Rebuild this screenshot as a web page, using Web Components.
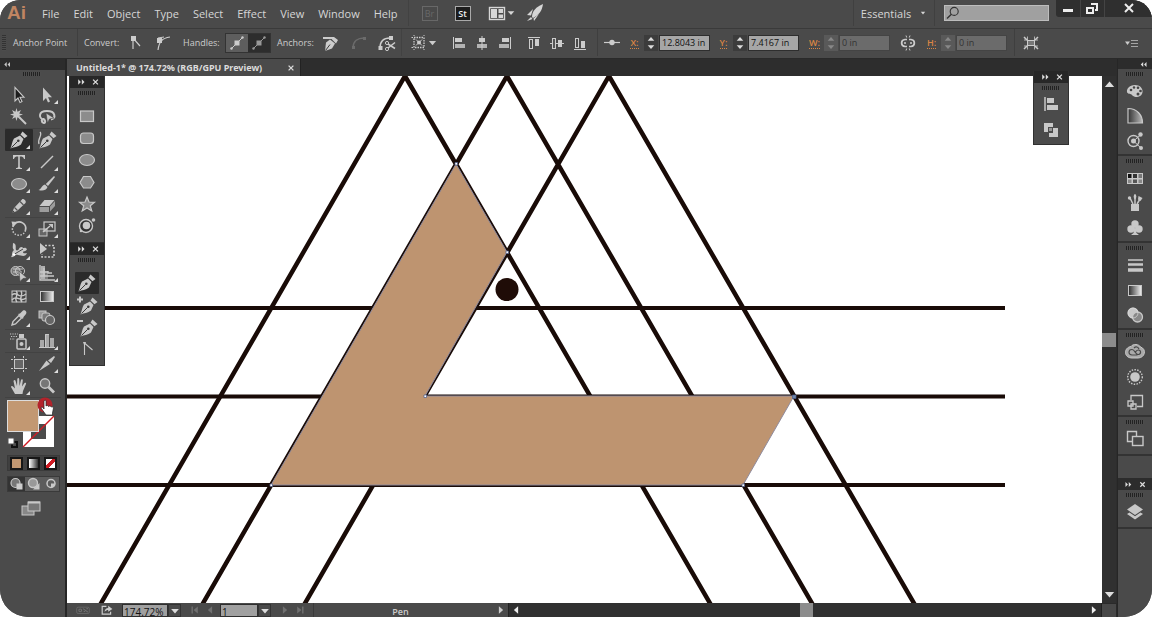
<!DOCTYPE html>
<html lang="en">
<head>
<meta charset="utf-8">
<title>Untitled-1 - Vector editor</title>
<style>
  html, body { height: 100%; margin: 0; background: #fff; }
  body { font-family: "Open Sans", "Noto Sans", sans-serif; overflow: hidden; }
</style>
</head>
<body>
<ai-app></ai-app>
<script>
// Icon artwork on a 20 x 20 grid, centred on 10,10.
const NIB = '<path d="M1.500 18.500 C3 15 3 11 5 8.500 L11 5.500 L14.500 9 L12 14.500 C9 17 5 17 1.500 18.500 Z"/><path d="M11.500 4.500 L13.500 1.500 L18.500 6 L15.500 8.300 Z"/><path d="M2.500 17.500 L8.500 11.500" stroke="#3a3a3a" stroke-width="1" fill="none"/><circle cx="9.300" cy="10.700" r="1.300" fill="#3a3a3a"/>';
const L = 'fill="none" stroke="currentColor"';
const ICONS = {
  select: `<path d="M6 2.500 V16 L9 13 L11 17.500 L13 16.500 L11 12.300 H15 Z" fill="#1d1d1d" stroke="currentColor" stroke-width="1.100"/>`,
  direct: `<path d="M6 2.500 V16 L9 13 L11 17.500 L13 16.500 L11 12.300 H15 Z"/>`,
  wand: `<path d="M7.500 1 L8.500 4.800 L12 3 L10.200 6.500 L14 7.500 L10.200 8.700 L12 12 L8.500 10.200 L7.500 14 L6.400 10.200 L3 12 L4.800 8.700 L1 7.500 L4.800 6.500 L3 3 L6.400 4.800 Z"/><path d="M10 10 L17 17" stroke="currentColor" stroke-width="2"/>`,
  lasso: `<path d="M8 13 C1 12 1 4 10 4 C19 4 19 11 14 12.500 M7 12 C4 12 4 15 7 16 C9 16 8 12 6.500 12" ${L} stroke-width="2"/><path d="M9 6 L17 11 L12.500 12 L10.500 16 Z" stroke="#444" stroke-width=".6"/>`,
  pen: NIB,
  curve: `<path d="M3 2 C6 5 0 9 2 14" ${L} stroke-width="1.300"/><g transform="translate(1 0)">${NIB}</g>`,
  type: `<path d="M4 3 H16 V7 H15 C14.500 5 13.500 4.500 10.800 4.500 V14.500 C10.800 15.500 12 16 13 16 V17 H7 V16 C8 16 9.200 15.500 9.200 14.500 V4.500 C6.500 4.500 5.500 5 5 7 H4 Z"/>`,
  line: `<path d="M4 16 L16 4" ${L} stroke-width="1.500"/>`,
  ellipse: `<ellipse cx="10" cy="10" rx="7.500" ry="5.500" fill="#8c8c8c" stroke="currentColor" stroke-width="1.200"/>`,
  brush: `<path d="M17 2 L18 3 L11 12 L8.800 10 Z"/><path d="M8 10.500 L10.500 13 C9 17 5 17 1.500 16 C5 15 4 11.500 8 10.500 Z"/>`,
  pencil: `<path d="M3 17 L5 12 L13 3.500 C14 2 18 5 16.500 7 L8 15 Z"/><path d="M5.500 11.500 L8.500 14.500 M11 5.500 L14.500 9" stroke="#555" stroke-width="1.200"/><path d="M3 17 L4 14.500 L5.500 16 Z" fill="#333"/>`,
  eraser: `<path d="M7.500 4 H17.500 L12.500 10 H2.500 Z"/><path d="M2.500 11 H12 V16 H2.500 Z M13 10.500 L18 5 V10 L13 15.500 Z" fill="#9c9c9c"/>`,
  rotate: `<path d="M5 5 C11 0 18 5 16.500 11 " ${L} stroke-width="1.700"/><path d="M16.500 11 C15 18 5 18 3.500 11 C3 8.500 4 6.500 5 5" ${L} stroke-width="1.500" stroke-dasharray="1.500 1.500"/><path d="M2.500 2.500 L8.500 3 L4 8.500 Z"/>`,
  scale: `<rect x="2" y="10" width="8" height="7" fill="#666" stroke="currentColor"/><rect x="7" y="3" width="11" height="9" ${L} stroke-width="1.200"/><path d="M6 13 L13 7" ${L} stroke-width="1.500"/><path d="M11.500 5 H16 V9.500 Z"/>`,
  width: `<path d="M4 2 C9 3 5 9 8 9.500 C10 9.500 10 6 12.500 6 C14 6 14 8 16 6.500 L18 8 C17 11 14 9.500 14 11.500 C15 13 17 12 18 12 C16 17 12 14 9 14 C6 13 5 17 2 16 C4 14 2 11 5 9 C3 7 4 5 4 2 Z"/><path d="M4 14 L14 8" stroke="#444" stroke-width="1"/><circle cx="5" cy="13.500" r="1.300" fill="#fff"/>`,
  transform: `<path d="M3 2 V13 L10 8 Z"/><path d="M8 4.500 H17 V16 H5 V13" ${L} stroke-width="1.600" stroke-dasharray="2 1.500"/>`,
  shape: `<circle cx="6.500" cy="8" r="4.500" fill="#777" stroke="currentColor"/><circle cx="11" cy="8" r="4.500" ${L}/><path d="M4 6 H14 M4 9 H13" stroke="currentColor"/><path d="M10 8 L18 15 L14 15.500 L11 18.500 Z" stroke="#444" stroke-width=".6"/>`,
  perspective: `<path d="M3 2 V17 H18 M7 5 V13 H17 M11 8 V10 H15 M3 9 H11 M3 13 H7" ${L} stroke-width="1.400"/><path d="M4 3 H8 V16 H4 Z" opacity=".8"/><path d="M8 8 H11 V16 H8 Z" opacity=".4"/>`,
  mesh: `<rect x="3" y="5" width="14" height="11" fill="#444" stroke="currentColor"/><path d="M3 9 C8 4 9 14 17 8 M3 14 C8 8 11 17 17 12 M7 5 C11 8 4 12 8 16 M12 5 C15 9 9 12 13 16" ${L} stroke-width="1.400"/>`,
  gradient: `<defs><linearGradient id="g"><stop stop-color="#2b2b2b"/><stop offset="1" stop-color="#f2f2f2"/></linearGradient></defs><rect x="3.500" y="5.500" width="13" height="10" fill="url(#g)" stroke="currentColor"/>`,
  dropper: `<path d="M3 17 L4 13.500 L10 7.500 L12.500 10 L6.500 16 Z" ${L} stroke-width="1.400"/><path d="M9 6 L11 5.500 L14 2.500 C16 1.500 18.500 4 17 6 L14.500 9 L14 11 Z"/>`,
  blend: `<rect x="2" y="3" width="7" height="7" fill="#999" stroke="currentColor"/><rect x="5" y="5" width="8" height="8" rx="2" fill="#777" stroke="currentColor"/><circle cx="13" cy="12" r="4.500" fill="#666" stroke="currentColor" stroke-width="1.200"/>`,
  spray: `<rect x="8" y="8" width="9" height="10" rx="1" ${L} stroke-width="1.500"/><path d="M10 3 H15 V7 H10 Z"/><circle cx="12.500" cy="13" r="2"/><path d="M1 3 H9 M2 5.500 H8 M1 8 H6" ${L} stroke-width="1.200" stroke-dasharray="1.200 1.200"/>`,
  graph: `<path d="M3 9 H7 V16 H3 Z M8 3 H12 V16 H8 Z M13 7 H17 V16 H13 Z" opacity=".75"/><path d="M2 16.500 H18 M8.500 16 V3.500 H12" ${L}/>`,
  artboard: `<rect x="5.500" y="5.500" width="9" height="9" fill="#666" stroke="currentColor"/><path d="M5.500 2 V4 M14.500 2 V4 M5.500 16 V18 M14.500 16 V18 M2 5.500 H4 M2 14.500 H4 M16 5.500 H18 M16 14.500 H18" ${L}/>`,
  slice: `<path d="M2 17 L9.500 6.500 L13 10 Z"/><path d="M11 6.500 L17 2 L18 3 L14 9 Z"/>`,
  hand: `<path d="M6 18 L2 11 C2 9.500 3.500 9.500 4.500 11 L6 12.500 L4.500 5 C5 3.500 6.300 4 6.600 5 L8 10 L8.300 3 C8.600 1.600 10 1.600 10.200 3 L10.500 10 L12 4 C12.500 2.600 14 3.300 13.800 4.500 L13 10.500 L15.500 7 C16.500 6.200 17.500 7 17 8 L14 15 L13.500 18 Z"/>`,
  zoom: `<circle cx="8" cy="7.500" r="4.700" fill="#777" stroke="currentColor" stroke-width="1.400"/><path d="M11.500 11 L17 16.500" stroke="currentColor" stroke-width="2.800"/>`,
  rect: `<rect x="3.500" y="5" width="13" height="10.500" fill="#8c8c8c" stroke="currentColor" stroke-width="1.200"/>`,
  rrect: `<rect x="3.500" y="5" width="13" height="10.500" rx="3" fill="#8c8c8c" stroke="currentColor" stroke-width="1.200"/>`,
  hexagon: `<path d="M6.500 4.500 H13.500 L17 10.500 L13.500 16 H6.500 L3 10.500 Z" fill="#8c8c8c" stroke="currentColor" stroke-width="1.200"/>`,
  star: `<path d="M10 3 L12 8 L17.500 8.300 L13.300 11.800 L14.800 17 L10 14 L5.200 17 L6.700 11.800 L2.500 8.300 L8 8 Z" fill="#8c8c8c" stroke="currentColor" stroke-width="1.200"/>`,
  flare: `<circle cx="9" cy="10" r="6.500" fill="#333" stroke="currentColor" stroke-width="1.400"/><circle cx="9.500" cy="9.500" r="3.800"/><circle cx="16.500" cy="4" r="1.800"/><circle cx="4" cy="15" r="1.300"/>`,
  penadd: `<path d="M0 4.500 H6 M3 1.500 V7.500" ${L} stroke-width="2"/><g transform="translate(2 1)">${NIB}</g>`,
  pendel: `<path d="M0 4 H6" ${L} stroke-width="2"/><g transform="translate(2 1)">${NIB}</g>`,
  anchor: `<path d="M7.500 16 V4 L15.500 11" ${L} stroke-width="1.100"/><path d="M6 3 H9 L7.500 7 Z"/>`,
  corner: `<path d="M8 16 V5 L15 13" ${L} stroke-width="1.200"/><rect x="6" y="3" width="5" height="5"/>`,
  smooth: `<path d="M5 17 C6 9 9 5 17 4" ${L} stroke-width="1.200"/><rect x="4" y="5" width="5" height="5"/><path d="M5 5 L11 4" ${L}/>`,
  handle: `<path d="M4 16 L16 4" ${L} stroke-width="1"/><rect x="7.500" y="7.500" width="5" height="5"/><circle cx="4.500" cy="15.500" r="1.200"/><circle cx="15.500" cy="4.500" r="1.200"/>`,
  removepen: `<path d="M4 18 L5 9.500 L9 6.500 L14 10.500 L11 15.500 Z"/><path d="M2 4 H13 L17 7 L15 10.500 L10.500 6 H2 Z"/><path d="M4.500 17.500 L9 11.500" stroke="#3a3a3a"/>`,
  curveoff: `<path d="M4 15 C4 8 9 5 15 5" ${L} stroke-width="1.500"/><rect x="3" y="13" width="3" height="3"/><rect x="14" y="4" width="3" height="3"/>`,
  cut: `<path d="M3 15 C3 8 7 5 13 5" ${L} stroke-width="1.500"/><rect x="1.500" y="13" width="4" height="4"/><rect x="12" y="3" width="4" height="4"/><circle cx="10" cy="16" r="1.600" ${L}/><circle cx="10" cy="10" r="1.600" ${L}/><path d="M11 11 L18 15.500 M11 15 L18 9.500" ${L} stroke-width="1.500"/>`,
  isolate: `<rect x="4" y="4.500" width="10" height="10" ${L} stroke-width="1.300" stroke-dasharray="1.500 1"/><path d="M6 6.500 L12 12.500 M12 6.500 L6 12.500" ${L}/><circle cx="9" cy="9.500" r="2"/><path d="M1.500 4.500 H3 M1.500 14.500 H3 M4 2 V3 M14 2 V3 M4 16 V17 M14 16 V17" ${L}/>`,
  alignl: `<path d="M4.500 4 V16" ${L}/><rect x="6" y="5" width="7" height="4"/><rect x="6" y="11" width="10" height="4" opacity=".8"/>`,
  alignbig: `<path d="M4 3 V17" ${L} stroke-width="1.500"/><rect x="6" y="4" width="7" height="5"/><rect x="6" y="11" width="11" height="5"/>`,
  alignc: `<path d="M10 3 V17" ${L}/><rect x="7" y="5" width="6" height="4"/><rect x="5" y="11" width="10" height="4" opacity=".8"/>`,
  alignr: `<path d="M15.500 4 V16" ${L}/><rect x="7" y="5" width="7" height="4"/><rect x="4" y="11" width="10" height="4" opacity=".8"/>`,
  alignt: `<path d="M4 4.500 H16" ${L}/><rect x="5.500" y="6.500" width="3" height="9" ${L}/><rect x="11" y="6" width="4" height="7"/>`,
  alignm: `<path d="M3 10.500 H17" ${L}/><rect x="5.500" y="5.500" width="3" height="10" fill="#555" stroke="currentColor"/><rect x="11" y="7" width="4" height="7"/>`,
  alignb: `<path d="M4 16.500 H16" ${L}/><rect x="5.500" y="5.500" width="3" height="9" ${L}/><rect x="11" y="8" width="4" height="7"/>`,
  point: `<path d="M2 9.500 H18" ${L} stroke-width="1.200"/><circle cx="10" cy="9.500" r="2.700"/>`,
  link: `<path d="M9 6.500 H7 C2.500 7 2.500 13 7 13.500 H9 M11 6.500 H13 C17.500 7 17.500 13 13 13.500 H11 M6 10 H8 M12 10 H14" ${L} stroke-width="1.700"/><path d="M8 2.500 L8.700 4.500 M12 2.500 L11.300 4.500 M8 17.500 L8.700 15.500 M12 17.500 L11.300 15.500" ${L}/>`,
  freet: `<rect x="6.500" y="7.500" width="7" height="5" fill="#777" stroke="currentColor"/><path d="M3 4 L6 7 M17 4 L14 7 M3 16 L6 13 M17 16 L14 13" ${L} stroke-width="1.500"/><path d="M6.500 3.500 V7 H3 M13.500 3.500 V7 H17 M6.500 16.500 V13 H3 M13.500 16.500 V13 H17" ${L} stroke-width=".8"/>`,
  menu: `<path d="M3 8.500 H8 L5.500 12 Z"/><path d="M9 7.500 H16 M9 10.500 H16 M9 13.500 H16" ${L} stroke-width="1" opacity=".7"/>`,
  arrange: `<rect x="2.500" y="4.500" width="15" height="12" fill="none" stroke="currentColor" stroke-width="1.400"/><path d="M4 6 H10 V15 H4 Z M11.500 6 H16 V10 H11.500 Z M11.500 11.500 H16 V15 H11.500 Z"/>`,
  rocket: `<path d="M18 1 C11 4 7 8 7 14 L8 15 C14 12 17 8 18 1 Z"/><path d="M8 6 L2 12 L6 12.500 Z M14 11 L9 18 L8.500 15.500 Z M6 14 L2 18 L7.500 16 Z"/>`,
  color: `<path d="M10 4 C4 4 1.500 8 2 11 C2.500 13 5 12.500 6.500 13.500 C8 15.500 10 16 12 16 C20 15.500 19.500 4 10 4 Z"/><g fill="#444"><circle cx="6" cy="9" r="1.300"/><circle cx="9" cy="6.500" r="1.200"/><circle cx="13" cy="6.800" r="1.300"/><circle cx="15.500" cy="10" r="1.300"/><circle cx="13" cy="13" r="1.500"/></g>`,
  guide: `<defs><linearGradient id="q" x1="0" y1="0" x2="1" y2="0"><stop stop-color="#333"/><stop offset="1" stop-color="#bbb"/></linearGradient></defs><path d="M3 2.500 V17 H17.500 C17.500 9 12 2.500 3 2.500 Z" fill="url(#q)" stroke="currentColor" stroke-width="1.200"/>`,
  themes: `<circle cx="8.500" cy="10" r="5.500" ${L} stroke-width="1.400"/><circle cx="8.500" cy="10" r="2.500"/><circle cx="15.500" cy="3.500" r="2.200"/><circle cx="16" cy="17" r="2"/><path d="M8.500 10 L15.500 4 M8.500 10 L16 17" ${L}/>`,
  swatches: `<path d="M2 5 H18 V16 H2 Z"/><path d="M3 6 H6.500 V10 H3 Z" fill="#111"/><path d="M8 6 H12 V10 H8 Z" fill="#333"/><path d="M13.500 6 H17 V10 H13.500 Z" fill="#777"/><path d="M3 11.500 H6.500 V15 H3 Z M13.500 11.500 H17 V15 H13.500 Z" fill="#888"/><path d="M8 11.500 H12 V15 H8 Z" fill="#555"/>`,
  brushes: `<path d="M6 11 H14 V18 H6 Z"/><path d="M10 11 V3 M8 11 L5 5 M12 11 L15 6" ${L} stroke-width="1.500"/><ellipse cx="10" cy="3.500" rx="1.300" ry="2.500"/><circle cx="4.500" cy="5" r="1.700"/><path d="M13.500 3 L17.500 5 L15.500 8 L13 6.500 Z"/>`,
  symbols: `<circle cx="10" cy="6" r="3.700"/><circle cx="6" cy="11" r="3.700"/><circle cx="14" cy="11" r="3.700"/><path d="M9.300 9 H10.700 L11.500 15 L14 17 H6 L8.500 15 Z"/>`,
  stroke: `<path d="M3 5 H18" stroke="currentColor" stroke-width="1.500"/><path d="M3 9.500 H18" stroke="currentColor" stroke-width="2.500"/><path d="M3 15 H18" stroke="currentColor" stroke-width="3.500"/>`,
  transp: `<circle cx="8" cy="8" r="5.500"/><circle cx="12.500" cy="12" r="5" fill="#888" stroke="currentColor" stroke-width="1.300"/><circle cx="8" cy="8" r="5" fill="none" stroke="#ddd" stroke-width=".7"/>`,
  cc: `<path d="M6 4.500 C8 1.500 14 2 15.500 5 C22 7 20 16 13 16 H7 C-1.500 16 -1.500 5.500 6 4.500 Z" fill="#aaa" stroke="currentColor"/><path d="M12.500 13 H7 C3 13 3 7.500 7 7.500 C10 7.500 10.500 13 13.500 12.500 C16.500 12 16 8 13.500 8 C11.500 8 11 9.500 10 10.500 M9 6 C11 4 13 5 14 7" fill="none" stroke="#484848" stroke-width="1.200"/>`,
  appear: `<circle cx="10" cy="10" r="4.800"/><circle cx="10" cy="10" r="7.300" ${L} stroke-width="1.400" stroke-dasharray="1.500 1.300"/>`,
  styles: `<path d="M6 8 V3.500 H17.500 V14.500 H12" ${L} stroke-width="1.300"/><path d="M3 9 H8 V14 H3 Z M6 12 H11 V17 H6 Z" ${L} stroke-width="1.300"/>`,
  artboards: `<path d="M7 12.500 H2.500 V2.500 H11.500 V7" ${L} stroke-width="1.400"/><rect x="7.500" y="7.500" width="10.500" height="9" ${L} stroke-width="1.400"/>`,
  layers: `<path d="M10 2 L18 7.500 L10 13 L2 7.500 Z"/><path d="M2 12 L4.500 10.500 L10 14.200 L15.500 10.500 L18 12 L10 17.500 Z"/>`,
  pathfinder: `<path d="M3 3 H12 V7 H7 V12 H3 Z" /><path d="M8 13 H12 V8 H17 V17 H8 Z"/><rect x="8" y="8" width="3" height="3" opacity=".6"/>`,
  drawn: `<circle cx="8.500" cy="9" r="4.500" fill="#777" stroke="currentColor" stroke-width="1.200"/><rect x="9.500" y="9.500" width="6" height="6" fill="#ccc"/>`,
  drawb: `<circle cx="9" cy="9" r="4.500" fill="#999" stroke="currentColor" stroke-width="1.400"/><path d="M15.500 9 V15.500 H9 Z"/>`,
  drawi: `<circle cx="10" cy="9.500" r="4" ${L} stroke-width="1.500"/><path d="M10 9.500 H14 A4 4 0 0 1 10 13.500 Z"/>`,
  screen: `<rect x="1" y="8" width="12" height="9" fill="#888" stroke="currentColor"/><rect x="7" y="4" width="12" height="9" fill="#777" stroke="currentColor"/><path d="M7 4.500 H19" ${L} stroke-width="2"/>`,
  left2: `<path d="M9.500 5.500 V14.500 L5 10 Z M15.500 5.500 V14.500 L11 10 Z"/>`,
  right2: `<path d="M4.500 5.500 V14.500 L9 10 Z M10.500 5.500 V14.500 L15 10 Z"/>`,
  close: `<path d="M6 6 L14 14 M14 6 L6 14" ${L} stroke-width="2.200"/>`,
  up: `<path d="M4.500 13 L10 6.500 L15.500 13 Z"/>`,
  down: `<path d="M4.500 7 L10 13.500 L15.500 7 Z"/>`,
  prev: `<path d="M13 4.500 V15.500 L7 10 Z"/>`,
  next: `<path d="M7 4.500 V15.500 L13 10 Z"/>`,
  first: `<path d="M14 5 V15 L8 10 Z M5 5 H7 V15 H5 Z"/>`,
  last: `<path d="M6 5 V15 L12 10 Z M13 5 H15 V15 H13 Z"/>`,
  share: `<path d="M9 4 H2 V17 H16 V13" ${L} stroke-width="2"/><path d="M6 13 C6 9 9 6.500 12 6.500 V3 L19 8.500 L12 13 V10 C10 10 8 11 6 13 Z"/>`,
  gpu: `<rect x="1" y="6" width="18" height="9" rx="2" ${L}/><circle cx="6" cy="10.500" r="2" ${L} stroke-width="1.500"/><path d="M10 8 L17 13 M11 12 H13 M15 8 H17" ${L} stroke-width="1.500"/>`,
  search: `<circle cx="11.500" cy="8" r="5" ${L} stroke-width="1.400"/><path d="M8 11.500 L2.500 17" ${L} stroke-width="1.700"/>`,
  minimise: `<path d="M5 10 H15 V13 H5 Z"/>`,
  restore: `<path d="M9 5 H15 V11 H13" ${L} stroke-width="2"/><rect x="5" y="9" width="6" height="5" ${L} stroke-width="2"/>`,
  x: `<path d="M6 5 L14 13 M14 5 L6 13" ${L} stroke-width="2"/>`
};

const RESET = `
  :host, *, *::before { box-sizing: border-box; }
  button, input { margin: 0; padding: 0; border: 0; background: none; color: inherit; font: inherit; }
  button { display: flex; align-items: center; justify-content: center; }`;

function define(name, css, html) {
  customElements.define(name, class extends HTMLElement {
    connectedCallback() {
      if (this.shadowRoot) return;
      const root = this.attachShadow({ mode: 'open' });
      root.innerHTML = `<style>${RESET}${css}</style>${typeof html === 'function' ? html(this) : html}`;
    }
  });
}

define('ai-icon', `
  :host { display: block; flex: none; width: 20px; height: 20px; }
  svg { display: block; width: 100%; height: 100%; fill: currentColor; overflow: visible; }`,
  el => `<svg viewBox="0 0 20 20" aria-hidden="true">${ICONS[el.getAttribute('name')]}</svg>`);

define('ai-grip', `
  :host { display: block; width: 18px; height: 4px; margin: 0 auto;
    background: repeating-linear-gradient(90deg, #222 0 1px, #4d4d4d 1px 2px); }
  :host([upright]) { width: 4px; height: 16px; margin: 0;
    background: repeating-linear-gradient(#333 0 1px, #4d4d4d 1px 2px); }`, '');

define('ai-tool', `
  :host { display: block; }
  button { position: relative; width: 100%; height: 100%; border-radius: 1px; }
  :host([active]) button { background: #2b2b2b; }
  :host([more]) button::after { content: ""; position: absolute; right: 3px; bottom: 2px;
    border-style: solid; border-width: 0 0 4px 4px; border-color: transparent transparent #ddd; }`,
  el => `<button type="button" aria-label="${el.getAttribute('label') || el.getAttribute('icon')}"><ai-icon name="${el.getAttribute('icon')}"></ai-icon></button>`);

define('ai-menubar', `
  :host { display: flex; align-items: stretch; height: 28px; background: #4a4a4a; color: #d6d6d6; font-size: 11px; }
  .logo { width: 35px; padding-left: 7px; font: bold 19px/25px "Liberation Sans", sans-serif; color: #c08562; }
  nav { display: flex; align-items: flex-start; }
  nav button { padding: 0 7px; height: 26px; white-space: nowrap; }
  .tools { display: flex; align-items: center; height: 26px; margin-left: 3px; padding-left: 13px; border-left: 1px solid #424242; }
  .badge { width: 16px; height: 15px; border: 1px solid #686868; color: #686868; font-size: 9px; line-height: 13px; }
  .badge.on { margin: 0 17px; background: #1c1c1c; border-color: #aaa; color: #eee; font-weight: 600; }
  .arr { width: 28px; }
  .arr ai-icon + ai-icon { width: 12px; margin-left: -2px; }
  .gpu { margin-left: 9px; }
  .right { display: flex; align-items: center; height: 26px; margin-left: auto; }
  .space { width: 82px; height: 26px; border: solid #404040; border-width: 0 1px; }
  .space ai-icon { width: 8px; height: 8px; margin-left: 8px; }
  .find { display: flex; align-items: center; width: 105px; height: 16px; margin: 0 7px 0 9px; background: #a0a0a0; border: 1px solid #bdbdbd; color: #333; }
  .find ai-icon { width: 16px; height: 16px; }
  .find input { flex: 1; min-width: 0; }
  .win { display: flex; align-self: flex-start; width: 96px; height: 17px; background: #2f2f2f; color: #eee; border-radius: 0 0 0 3px; }
  .win button { flex: 1; border-right: 1px solid #444; }
  .win button:last-child { flex: 2; border: 0; }
  .win ai-icon { width: 20px; height: 20px; }`, `
  <div class="logo">Ai</div>
  <nav aria-label="Main menu">${['File','Edit','Object','Type','Select','Effect','View','Window','Help'].map(t => `<button type="button">${t}</button>`).join('')}</nav>
  <div class="tools"><button type="button" class="badge">Br</button><button type="button" class="badge on">St</button>
    <button type="button" class="arr" aria-label="Arrange documents"><ai-icon name="arrange"></ai-icon><ai-icon name="down"></ai-icon></button>
    <button type="button" class="gpu" aria-label="GPU"><ai-icon name="rocket"></ai-icon></button></div>
  <div class="right">
    <button type="button" class="space">Essentials<ai-icon name="down"></ai-icon></button>
    <label class="find"><ai-icon name="search"></ai-icon><input type="search" aria-label="Search"></label>
    <div class="win"><button type="button" aria-label="Minimise"><ai-icon name="minimise"></ai-icon></button><button type="button" aria-label="Restore"><ai-icon name="restore"></ai-icon></button><button type="button" aria-label="Close"><ai-icon name="x"></ai-icon></button></div>
  </div>`);

define('ai-field', `
  :host { display: grid; grid-template-columns: 17px 14px 51px; column-gap: 1px; align-items: center; }
  label { justify-self: center; color: #d98544; font-weight: 600; line-height: 11px; border-bottom: 1px dotted #d98544; }
  .spin { display: grid; height: 16px; background: #3c3c3c; color: #ddd; }
  .spin button { height: 8px; }
  .spin ai-icon { width: 12px; height: 12px; }
  input { width: 100%; height: 16px; padding-left: 2px; background: #a6a6a6; border: 1px solid #2e2e2e; color: #111; }
  :host([off]) .spin { background: #595959; color: #888; }
  :host([off]) input { background: #6b6b6b; border-color: #444; color: #333; }`,
  el => `<label for="v">${el.getAttribute('label')}</label>
  <div class="spin"><button type="button" aria-label="Increase"><ai-icon name="up"></ai-icon></button><button type="button" aria-label="Decrease"><ai-icon name="down"></ai-icon></button></div>
  <input id="v" type="text" value="${el.getAttribute('value')}" ${el.hasAttribute('off') ? 'disabled' : ''}>`);

define('ai-controlbar', `
  :host { display: grid; align-items: center; height: 30px; padding-bottom: 2px; background: #4a4a4a; color: #ccc; border-top: 1px solid #3a3a3a; font-size: 9px; white-space: nowrap;
    grid-template-columns: 78px 43px repeat(2, 28px) 48px 46px 46px repeat(3, 28px) 46px 69px 6px 76px 28px 86px 3px 86px 5px 86px 31px 86px 6px 32px 1fr; }
  .name { display: flex; align-items: center; gap: 7px; padding-left: 2px; height: 27px; border-right: 1px solid #3f3f3f; }
  .lab { padding-left: 6px; }
  .row { display: flex; }
  ai-tool { height: 22px; }
  .pair { display: grid; grid-template-columns: 22px 22px; height: 20px; border: 1px solid #333; background: #2d2d2d; }
  .pair ai-tool { height: 18px; }
  .pair ai-tool:first-child { background: #5e5e5e; }
  .pair ai-tool:last-child { color: #999; }
  .dim { opacity: .25; }
  .row ai-tool { flex: 0 0 23px; }
  .drop { height: 27px; border-left: 1px solid #424242; }
  .drop ai-icon + ai-icon { width: 13px; margin-left: -4px; }
  .last { justify-self: end; width: 40px; }
  .end { height: 27px; border-right: 1px solid #3f3f3f; align-items: center; }
  .rule { height: 27px; border-right: 1px solid #3f3f3f; }`, `
  <div class="name"><ai-grip upright></ai-grip><span>Anchor Point</span></div>
  <span class="lab">Convert:</span><ai-tool icon="corner"></ai-tool><ai-tool icon="smooth"></ai-tool>
  <span class="lab">Handles:</span><div class="pair"><ai-tool icon="handle"></ai-tool><ai-tool icon="handle"></ai-tool></div>
  <span class="lab">Anchors:</span><ai-tool icon="removepen"></ai-tool><ai-tool class="dim" icon="curveoff"></ai-tool><ai-tool icon="cut"></ai-tool>
  <button type="button" class="drop" aria-label="Isolate"><ai-icon name="isolate"></ai-icon><ai-icon name="down"></ai-icon></button>
  <div class="row"><ai-tool icon="alignl"></ai-tool><ai-tool icon="alignc"></ai-tool><ai-tool icon="alignr"></ai-tool></div><i></i>
  <div class="row end"><ai-tool icon="alignt"></ai-tool><ai-tool icon="alignm"></ai-tool><ai-tool icon="alignb"></ai-tool></div>
  <ai-tool icon="point"></ai-tool>
  <ai-field label="X:" value="12.8043 in"></ai-field><i></i><ai-field label="Y:" value="7.4167 in"></ai-field><i></i>
  <ai-field off label="W:" value="0 in"></ai-field><ai-tool icon="link"></ai-tool><ai-field off label="H:" value="0 in"></ai-field>
  <i class="rule"></i><ai-tool icon="freet"></ai-tool><ai-tool class="last" icon="menu"></ai-tool>`);

const GROUPS = [
  ['select', 'direct+', 'wand', 'lasso'],
  ['pen+*', 'curve', 'type+', 'line+', 'ellipse+', 'brush+', 'pencil+', 'eraser+'],
  ['rotate+', 'scale+', 'width+', 'transform', 'shape+', 'perspective+'],
  ['mesh', 'gradient', 'dropper+', 'blend'],
  ['spray+', 'graph+'],
  ['artboard', 'slice+', 'hand+', 'zoom']
];
const tool = t => `<ai-tool icon="${t.replace(/[+*]/g, '')}" ${t.includes('+') ? 'more' : ''} ${t.includes('*') ? 'active' : ''}></ai-tool>`;

define('ai-toolbox', `
  :host { display: flex; flex-direction: column; background: #4b4b4b; color: #c8c8c8; border-right: 2px solid #262626; }
  header { flex: none; height: 11px; background: #2c2c2c; }
  header ai-icon { width: 14px; height: 11px; }
  ai-grip { margin: 2px 0 8px 23px; flex: none; }
  .group { display: grid; grid-template-columns: 28px 28px; grid-auto-rows: 22px; margin: 0 4px 0 5px; border-bottom: 1px solid #424242; }
  .group:last-of-type { border: 0; }
  .paint { position: relative; flex: none; width: 47px; height: 47px; margin: 2px 0 8px 7px; }
  .paint button { position: absolute; }
  .line { left: 16px; top: 16px; width: 31px; height: 31px; }
  .fill { left: 0; top: 0; width: 32px; height: 32px; background: #c29872; border: 1px solid #ddd; }
  .def { left: 0; top: 37px; width: 12px; height: 12px; }
  .swap { left: 30px; top: -3px; width: 22px; height: 22px; }
  .paint svg { display: block; width: 100%; height: 100%; overflow: visible; }
  .three { flex: none; display: grid; grid-template-columns: repeat(3, 17px); grid-auto-rows: 14px; width: 53px; height: 16px; margin: 0 0 5px 7px; border: 1px solid #3a3a3a; background: #404040; }
  .three span { display: block; width: 13px; height: 13px; border: 2px solid #171717; }
  .c { background: #c29872; } .g { background: linear-gradient(90deg, #fff, #333); }
  .n { background: linear-gradient(to bottom right, #fff 38%, #d01c24 38% 62%, #fff 62%); }
  .modes { background: #5c5c5c; }
  .modes button:first-child { background: #333; }
  .mode { width: 28px; height: 24px; margin: -1px 0 0 17px; }`,
  `<header><ai-icon name="left2"></ai-icon></header><ai-grip></ai-grip>
  ${GROUPS.map(g => `<div class="group">${g.map(tool).join('')}</div>`).join('')}
  <section class="paint" aria-label="Fill and stroke">
    <button type="button" class="line" aria-label="Stroke"><svg viewBox="0 0 31 31"><path fill="#fff" fill-rule="evenodd" d="M0 0 H31 V31 H0 Z M8 8 V23 H23 V8 Z"/><path d="M0 31 L31 0" stroke="#d01c24" stroke-width="1.500"/></svg></button>
    <button type="button" class="fill" aria-label="Fill"></button>
    <button type="button" class="def" aria-label="Default colours"><svg viewBox="0 0 12 12"><rect x="5" y="5" width="5" height="5" fill="none" stroke="#111" stroke-width="2"/><rect x="1" y="1" width="6" height="6" fill="#fff" stroke="#555"/></svg></button>
    <button type="button" class="swap" aria-label="Swap fill and stroke"><svg viewBox="0 0 22 22"><circle cx="8" cy="8" r="7.500" fill="#b3232b"/><path d="M9 18 L4 11 C4 9.500 6 10 7 12 L7 4 C7.500 3 9 3 9 4 V9 C10 8 11.500 8.500 11.500 9.500 C12.500 8.500 14 9 14 10 C15 9.500 16.500 10 16.500 11 L15.500 16 V18 Z" fill="#fff" stroke="#222" stroke-width=".7"/></svg></button>
  </section>
  <div class="three"><button type="button" aria-label="Colour"><span class="c"></span></button><button type="button" aria-label="Gradient"><span class="g"></span></button><button type="button" aria-label="None"><span class="n"></span></button></div>
  <div class="three modes"><button type="button" aria-label="Draw normal"><ai-icon name="drawn"></ai-icon></button><button type="button" aria-label="Draw behind"><ai-icon name="drawb"></ai-icon></button><button type="button" aria-label="Draw inside"><ai-icon name="drawi"></ai-icon></button></div>
  <ai-tool class="mode" icon="screen"></ai-tool>`);

define('ai-panel', `
  :host { display: block; background: #4b4b4b; color: #c8c8c8; border: 1px solid #303030; border-top: 0; }
  header { display: flex; align-items: center; justify-content: space-between; height: 12px; padding: 0 2px 0 5px; background: #272727; color: #ddd; }
  header ai-icon { width: 13px; height: 12px; }
  ai-grip { margin-top: 3px; }`,
  `<header><ai-icon name="right2"></ai-icon><ai-icon name="close"></ai-icon></header><ai-grip></ai-grip><slot></slot>`);

define('ai-canvas', `
  :host { display: block; position: relative; min-width: 0; min-height: 0; background: #fff; }
  svg { display: block; position: absolute; inset: 0; width: 100%; height: 100%; }
  ai-panel { position: absolute; left: 2px; width: 36px; }
  ai-panel ai-tool { height: 22px; margin: 0 5px; }
  .shapes { top: 0; height: 167px; }
  .shapes ai-tool:first-of-type { margin-top: 10px; }
  .pens { top: 167px; height: 123px; }
  .pens ai-tool:first-of-type { margin-top: 10px; }
  .aligns { top: -5px; left: auto; right: 33px; height: 74px; }
  .aligns ai-tool { height: 26px; }
  .aligns ai-tool:first-of-type { margin-top: 1px; }`, `
  <svg role="img" aria-label="Artwork"><g transform="translate(-67 -76)">
    <g stroke="#190b07" stroke-width="4.500" fill="none">
      <path d="M100 605 L405 76 L711 605 M202 605 L507 76 L813 605 M304 605 L609 76 L915 605"/>
      <path d="M60 308 H1005 M60 396.500 H1005 M60 485 H1005" stroke-width="4"/>
    </g>
    <path d="M456 164 L507 252 L425 396 H794 L743 485 H271 Z" fill="#be9470" stroke="#8f8a9c" stroke-width="1"/>
    <circle cx="507" cy="289.500" r="11.500" fill="#1f0c07"/>
    <g fill="#fff" stroke="#4a5c8c" stroke-width=".7"><path d="M455 162.500 h2.500 v2.500 h-2.500 Z M506 251 h2.500 v2.500 h-2.500 Z M424 395 h2.500 v2.500 h-2.500 Z M742 484 h2.500 v2.500 h-2.500 Z M270 484 h2.500 v2.500 h-2.500 Z"/><path fill="#6d86a8" d="M792.500 395 h3.500 v3.500 h-3.500 Z"/></g>
  </g></svg>
  <ai-panel class="shapes">${['rect','rrect','ellipse','hexagon','star','flare'].map(tool).join('')}</ai-panel>
  <ai-panel class="pens">${['pen*','penadd','pendel','anchor'].map(tool).join('')}</ai-panel>
  <ai-panel class="aligns">${['alignbig','pathfinder'].map(tool).join('')}</ai-panel>`);

define('ai-status', `
  :host { display: flex; align-items: center; height: 14px; background: #4a4a4a; color: #ccc; font-size: 9px; overflow: hidden; }
  button { height: 14px; }
  .dim { color: #707070; }
  ai-icon { width: 14px; height: 14px; }
  .wide { width: 18px; }
  .share ai-icon { width: 12px; height: 12px; }
  .combo { display: flex; height: 14px; padding-top: 1px; }
  input { width: 46px; height: 13px; padding: 2px 0 0 1px; background: #a0a0a0; border: 1px solid #2e2e2e; color: #111; font-size: 10px; line-height: 12px; }
  .num { margin-left: 3px; }
  .num input { width: 38px; }
  .combo button { width: 13px; height: 13px; border: 1px solid #333; color: #ddd; }
  .left { display: flex; align-items: center; width: 441px; padding-left: 7px; }
  .left > button { width: 15px; }
  .left > .share { width: 30px; }
  .gap { margin-left: 6px; }
  .pen { flex: 1; margin-left: 6px; text-align: center; border-left: 1px solid #3a3a3a; font-weight: 600; line-height: 18px; height: 14px; padding-right: 6px; }
  .bar { flex: 1; display: flex; align-items: center; justify-content: space-between; height: 14px; background: #303030; border: solid #222; border-width: 0 1px; color: #eee; }
  .thumb { width: 13px; height: 14px; margin-left: 3px; background: #8c8c8c; }`, `
  <div class="left">
    <ai-icon class="wide dim" name="gpu"></ai-icon>
    <button type="button" class="share" aria-label="Share"><ai-icon name="share"></ai-icon></button>
    <div class="combo"><input type="text" value="174.72%" aria-label="Zoom"><button type="button" aria-label="Zoom levels"><ai-icon name="down"></ai-icon></button></div>
    <button type="button" class="dim gap" aria-label="First artboard"><ai-icon name="first"></ai-icon></button><button type="button" class="dim" aria-label="Previous artboard"><ai-icon name="prev"></ai-icon></button>
    <div class="combo num"><input type="text" value="1" aria-label="Artboard"><button type="button" aria-label="Artboards"><ai-icon name="down"></ai-icon></button></div>
    <button type="button" class="dim gap" aria-label="Next artboard"><ai-icon name="next"></ai-icon></button><button type="button" class="dim" aria-label="Last artboard"><ai-icon name="last"></ai-icon></button>
    <span class="pen">Pen</span><button type="button" aria-label="Status menu"><ai-icon name="next"></ai-icon></button>
  </div>
  <div class="bar"><button type="button" aria-label="Scroll left"><ai-icon name="prev"></ai-icon></button><span class="thumb"></span><button type="button" aria-label="Scroll right"><ai-icon name="next"></ai-icon></button></div>`);

define('ai-vscroll', `
  :host { display: flex; flex-direction: column; align-items: center; justify-content: space-between; width: 14px; background: #303030; color: #ddd; }
  ai-icon { width: 17px; height: 17px; }
  .thumb { width: 14px; height: 14px; background: #8c8c8c; }`, `
  <button type="button" aria-label="Scroll up"><ai-icon name="up"></ai-icon></button><span class="thumb"></span><button type="button" aria-label="Scroll down"><ai-icon name="down"></ai-icon></button>`);

define('ai-document', `
  :host { flex: 1; min-width: 0; display: grid; grid-template-rows: 17px 1fr 14px; grid-template-columns: 1fr 15px; background: #2d2d2d; }
  .tabs { grid-column: 1 / -1; display: flex; }
  .tab { display: flex; align-items: center; justify-content: space-between; width: 234px; padding: 0 3px 0 9px; background: #4a4a4a; color: #dcdcdc; font: 700 9px "Noto Sans", sans-serif; border-right: 1px solid #222; white-space: nowrap; }
  .tab ai-icon { width: 12px; height: 12px; }
  .corner { background: #484848; border: solid #2a2a2a; border-width: 1px 1px 0 0; }`, `
  <div class="tabs"><div class="tab"><span>Untitled-1* @ 174.72% (RGB/GPU Preview)</span><button type="button" aria-label="Close tab"><ai-icon name="close"></ai-icon></button></div></div>
  <ai-canvas></ai-canvas><ai-vscroll></ai-vscroll><ai-status></ai-status><div class="corner"></div>`);

const dock = (list, cls = '') => `<section class="${cls}"><ai-grip></ai-grip>${list.map(tool).join('')}</section>`;
define('ai-dock', `
  :host { display: block; flex: none; width: 35px; background: #4a4a4a; color: #c8c8c8; border-left: 1px solid #262626; }
  header { display: flex; align-items: center; justify-content: flex-end; height: 10px; background: #2c2c2c; color: #ddd; padding-right: 2px; }
  header.two { justify-content: space-between; padding: 0 3px 0 4px; margin-top: 22px; height: 12px; }
  header ai-icon { width: 13px; height: 11px; }
  section { height: 87px; padding-top: 3px; border-bottom: 2px solid #333; }
  ai-grip { margin-bottom: 2px; }
  ai-tool { height: 25px; }
  .short { height: 39px; }`, `
  <header><ai-icon name="left2"></ai-icon></header>
  ${dock(['color','guide','themes'])}${dock(['swatches','brushes','symbols'])}${dock(['stroke','gradient','transp'])}${dock(['cc','appear','styles'])}${dock(['artboards'], 'short')}
  <header class="two"><ai-icon name="right2"></ai-icon><ai-icon name="close"></ai-icon></header>
  ${dock(['layers'], 'short')}`);

define('ai-app', `
  :host { display: flex; flex-direction: column; height: 100vh; overflow: hidden; border-radius: 20px 20px 28px 28px; background: #4a4a4a; }
  main { flex: 1; min-height: 0; display: flex; border-top: 1px solid #2a2a2a; }
  ai-toolbox { flex: 0 0 67px; }`, `
  <ai-menubar></ai-menubar><ai-controlbar></ai-controlbar>
  <main><ai-toolbox></ai-toolbox><ai-document></ai-document><ai-dock></ai-dock></main>`);
</script>
</body>
</html>
